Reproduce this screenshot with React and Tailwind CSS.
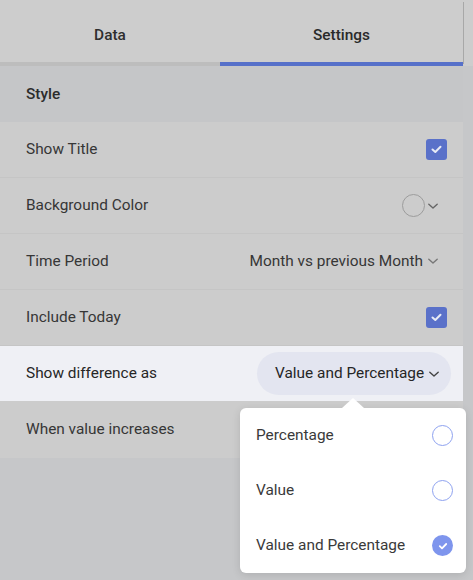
import React from "react";

function Chevron({ className = "" }) {
  return (
    <svg width="12" height="12" viewBox="0 0 12 12" className={className}>
      <path d="M1.8 4.2 L6 8 L10.2 4.2" fill="none" stroke="currentColor" strokeWidth="1.4" strokeLinecap="round" strokeLinejoin="round" />
    </svg>
  );
}

function Checkbox() {
  return (
    <div className="w-[21px] h-[21px] rounded-[3px] bg-[#5a71c9] flex items-center justify-center">
      <svg width="13" height="13" viewBox="0 0 13 13">
        <path d="M2.5 6.5 L5.3 9 L10.5 3.8" fill="none" stroke="#e8ebf5" strokeWidth="2" strokeLinecap="round" strokeLinejoin="round" />
      </svg>
    </div>
  );
}

function Row({ label, children }) {
  return (
    <div className="h-[56px] flex items-center justify-between pl-[26px] pr-[16px] border-b border-[#c5c5c5] bg-[#cccccc]">
      <span className="text-[15.4px] text-[#363636]">{label}</span>
      {children}
    </div>
  );
}

function Radio({ checked }) {
  if (checked) {
    return (
      <div className="w-[21px] h-[21px] rounded-full bg-[#7e95ed] flex items-center justify-center">
        <svg width="12" height="12" viewBox="0 0 12 12">
          <path d="M2.8 6.2 L5 8.3 L9.2 4" fill="none" stroke="#ffffff" strokeWidth="1.8" strokeLinecap="round" strokeLinejoin="round" />
        </svg>
      </div>
    );
  }
  return <div className="w-[21px] h-[21px] rounded-full border-[1.5px] border-[#8ea2f0] bg-white" />;
}

export default function App() {
  return (
    <div className="w-[473px] h-[580px] bg-[#c6c7c9] relative overflow-hidden font-['Roboto',sans-serif]">
      {/* tab header */}
      <div className="flex h-[66px] bg-[#cdcdcd] pt-[2px]">
        <div className="w-[463px] flex">
          <div className="w-[220px] flex flex-col">
            <div className="flex-1 flex items-center justify-center pt-[7px] text-[15.4px] font-medium text-[#2e2e2e]">Data</div>
            <div className="h-[4px] bg-[#bdbdbd]" />
          </div>
          <div className="flex-1 flex flex-col">
            <div className="flex-1 flex items-center justify-center pt-[7px] text-[15.4px] font-medium text-[#2a2a2a]">Settings</div>
            <div className="h-[4px] bg-[#5670c9]" />
          </div>
        </div>
        <div className="w-[1px] h-[62px] bg-[#a8a8a8]" />
        <div className="flex-1" />
      </div>

      <div className="w-[463px]">
        <div className="h-[56px] bg-[#c5c6c8] flex items-center pl-[26px] pt-[1px] text-[15.4px] font-medium text-[#2c2c2c]">
          Style
        </div>

        <Row label="Show Title">
          <Checkbox />
        </Row>
        <Row label="Background Color">
          <div className="flex items-center gap-[2px] mr-[8px]">
            <div className="w-[23px] h-[23px] rounded-full border-[1.5px] border-[#9c9c9c]" />
            <Chevron className="text-[#666]" />
          </div>
        </Row>
        <Row label="Time Period">
          <div className="flex items-center gap-[4px] text-[15.4px] text-[#363636] mr-[8px]">
            <span>Month vs previous Month</span>
            <Chevron className="text-[#777]" />
          </div>
        </Row>
        <Row label="Include Today">
          <Checkbox />
        </Row>
        <div className="h-[55px] flex items-center justify-between pl-[26px] pr-[12px] bg-[#eff0f5]">
          <span className="text-[15.4px] text-[#262626]">Show difference as</span>
          <div className="h-[43px] w-[194px] rounded-full bg-[#e3e5f0] flex items-center pl-[18px] gap-[4px] text-[15.4px] text-[#262626]">
            <span>Value and Percentage</span>
            <Chevron className="text-[#444]" />
          </div>
        </div>
        <div className="h-[57px] bg-[#cccccc] flex items-center pl-[26px]">
          <span className="text-[15.4px] text-[#363636]">When value increases</span>
        </div>
      </div>

      {/* dropdown */}
      <div className="absolute left-[240px] top-[408px] w-[226px] h-[165px] bg-white rounded-[6px] shadow-[0_2px_8px_rgba(0,0,0,0.12)]">
        <div className="absolute left-[102px] top-[-10px] w-0 h-0 border-l-[11px] border-r-[11px] border-b-[10px] border-l-transparent border-r-transparent border-b-white" />
        {[
          ["Percentage", false],
          ["Value", false],
          ["Value and Percentage", true],
        ].map(([t, c]) => (
          <div key={t} className="h-[55px] flex items-center justify-between pl-[16px] pr-[13px]">
            <span className="text-[15.4px] text-[#3a3a3a]">{t}</span>
            <Radio checked={c} />
          </div>
        ))}
      </div>
    </div>
  );
}
